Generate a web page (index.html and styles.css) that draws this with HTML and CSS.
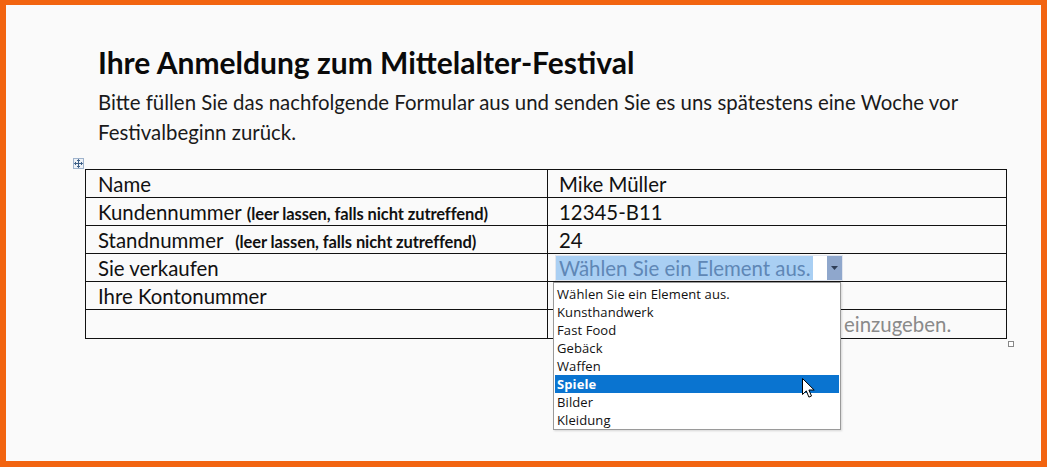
FILE: index.html
```html
<!DOCTYPE html>
<html lang="de">
<head>
<meta charset="utf-8">
<link rel="stylesheet" href="styles.css">
</head>
<body>
<div class="frame">
  <div class="page">
    <h1 class="title">Ihre Anmeldung zum Mittelalter-Festival</h1>
    <p class="intro">Bitte füllen Sie das nachfolgende Formular aus und senden Sie es uns spätestens eine Woche vor<br>Festivalbeginn zurück.</p>
    <div class="table-wrap">
      <span class="move-handle">
        <svg width="9" height="9" viewBox="0 0 9 9"><path d="M4.5 0.5v8M0.5 4.5h8M3 2l1.5-1.5L6 2M3 7l1.5 1.5L6 7M2 3L0.5 4.5 2 6M7 3l1.5 1.5L7 6" fill="none" stroke="#3d5f86" stroke-width="1"/></svg>
      </span>
      <table class="form">
        <tr><td class="label">Name</td><td class="value">Mike Müller</td></tr>
        <tr><td class="label">Kundennummer<span class="note">(leer lassen, falls nicht zutreffend)</span></td><td class="value">12345-B11</td></tr>
        <tr><td class="label">Standnummer <span class="note gap">(leer lassen, falls nicht zutreffend)</span></td><td class="value">24</td></tr>
        <tr><td class="label">Sie verkaufen</td><td class="value ctrl-cell"><div class="ctrl"><span class="ctrl-text">Wählen Sie ein Element aus.</span><span class="ctrl-btn"><svg width="7" height="4" viewBox="0 0 7 4"><path d="M0 0h7L3.5 4z" fill="#2f3e57"/></svg></span></div></td></tr>
        <tr><td class="label">Ihre Kontonummer</td><td class="value"></td></tr>
        <tr class="last"><td class="label"></td><td class="value placeholder">Klicken Sie hier, um Text einzugeben.</td></tr>
      </table>
      <span class="resize-handle"></span>
      <ul class="list">
        <li>Wählen Sie ein Element aus.</li>
        <li>Kunsthandwerk</li>
        <li>Fast Food</li>
        <li>Gebäck</li>
        <li>Waffen</li>
        <li class="selected">Spiele</li>
        <li>Bilder</li>
        <li>Kleidung</li>
      </ul>
      <svg class="cursor" width="13" height="21" viewBox="0 0 13 21"><path d="M0.5 0.5v16l3.8-3.6 2.6 6.2 2.6-1.1-2.6-6h5.3z" fill="#fff" stroke="#000" stroke-width="1" stroke-linejoin="round"/></svg>
    </div>
  </div>
</div>
</body>
</html>
```

FILE: styles.css
```css
* { box-sizing: border-box; }
html, body { margin: 0; padding: 0; }
body { width: 1047px; height: 467px; overflow: hidden; background: #f26410; }
.frame {
  width: 1047px;
  height: 467px;
  border-style: solid;
  border-color: #f26410;
  border-width: 5px 6px 6px 6px;
  background: #fafafa;
  font-family: Lato, "Liberation Sans", sans-serif;
  color: #111;
}
.page { padding: 39px 0 0 92px; }
.title {
  margin: 0;
  font-size: 30px;
  font-weight: bold;
  line-height: 36px;
  color: #0a0a0a;
}
.intro {
  margin: 0;
  padding-top: 7px;
  font-size: 20.4px;
  line-height: 30px;
  color: #1a1a1a;
}
.table-wrap {
  position: relative;
  margin: 22px 0 0 -13px;
  width: 922px;
}
.form {
  width: 922px;
  border-collapse: collapse;
  font-size: 20.4px;
  table-layout: fixed;
}
.form td {
  border: 1px solid #111;
  height: 28px;
  padding: 0 0 0 12px;
  line-height: 24px;
  white-space: nowrap;
  vertical-align: middle;
}
.form tr.last td { height: 29px; }
.form td.label { width: 462px; }
.form td.value { padding-left: 11px; }
.note { font-size: 16.5px; line-height: 1; font-weight: bold; letter-spacing: -0.1px; margin-left: 5px; }
.note.gap { margin-left: 7px; }
.form td.ctrl-cell { padding: 0 0 0 7px; line-height: 0; }
.ctrl {
  display: flex;
  width: max-content;
  height: 26px;
  border: 1px solid #e2e6ee;
  background: #fff;
}
.ctrl-text {
  background: #a9cff3;
  color: #5f87b6;
  padding: 0 0 0 3px;
  line-height: 24px;
  width: 257px;
  overflow: hidden;
}
.ctrl-btn {
  margin-left: 14px;
  width: 15px;
  background: #8fa7cc;
  display: flex;
  align-items: center;
  justify-content: center;
}
.form td.placeholder { color: #8a8a8a; padding-left: 75px; overflow: hidden; }
.move-handle {
  position: absolute;
  left: -12px;
  top: -11px;
  width: 11px;
  height: 11px;
  border: 1px solid #9fb3cc;
  background: #eef2f7;
  display: flex;
  align-items: center;
  justify-content: center;
}
.resize-handle {
  position: absolute;
  left: 923px;
  top: 172px;
  width: 6px;
  height: 6px;
  border: 1px solid #888;
  background: #fff;
}
.list {
  position: absolute;
  left: 468px;
  top: 113px;
  width: 288px;
  height: 148px;
  margin: 0;
  padding: 2px 1px 0 1px;
  list-style: none;
  background: #fff;
  border: 1px solid #9a9a9a;
  box-shadow: 1px 1px 2px rgba(0,0,0,0.15);
  font-family: "Open Sans", "Noto Sans", sans-serif;
  font-size: 13px;
  color: #111;
}
.list li {
  height: 18px;
  line-height: 18px;
  padding-left: 2px;
  letter-spacing: 0.1px;
}
.list li.selected {
  background: #0a74d0;
  color: #fff;
  font-weight: bold;
}
.cursor {
  position: absolute;
  left: 717px;
  top: 209px;
}
```
